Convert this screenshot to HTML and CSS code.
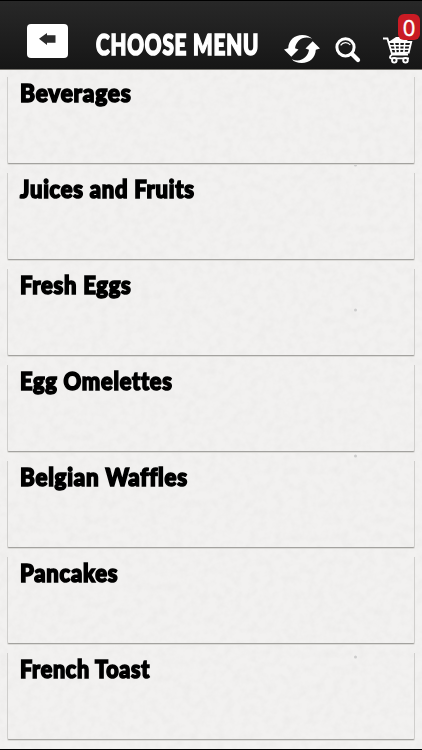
FILE: index.html
```html
<!DOCTYPE html>
<html>
	<head>
		<meta charset="UTF-8">
		<title>Choose Menu</title>
		<link rel="stylesheet" href="styles.css">
	</head>
	<body>
		<div class="header">
			<a href="#" class="back">
				<svg width="17" height="12" viewBox="0 0 17 12"><path d="M0 5.8L8 0v2.2h8.5v7.6H8V12z" fill="#2b2b2b"/></svg>
			</a>
			<h1 class="title"><span>CHOOSE MENU</span></h1>
			<a href="#" class="refresh">
				<svg width="37" height="30" viewBox="0 0 37 30">
					<g fill="#fff">
						<path d="M0 15.5L4.2 14.2C4.6 6 10.5 1 18.3 1C22.4 1 26 2.3 28.2 4.8C19.3 1 12.2 6.7 11 14.2L14.5 15.5L7.3 22.8z"/>
						<path d="M0 15.5L4.2 14.2C4.6 6 10.5 1 18.3 1C22.4 1 26 2.3 28.2 4.8C19.3 1 12.2 6.7 11 14.2L14.5 15.5L7.3 22.8z" transform="rotate(180 18 15)"/>
					</g>
				</svg>
			</a>
			<a href="#" class="search">
				<svg width="26" height="26" viewBox="0 0 26 26" fill="none" stroke="#fff">
					<circle cx="10.5" cy="10.3" r="8.6" stroke-width="3"/>
					<path d="M5.6 8.3C8 4.9 12.8 4.7 15.3 8" stroke-width="1.2"/>
					<path d="M17 17L23 23" stroke-width="4.2" stroke-linecap="round"/>
				</svg>
			</a>
			<a href="#" class="cart">
				<svg width="30" height="28" viewBox="0 0 30 28" fill="none" stroke="#fff" stroke-width="1.9">
					<path d="M7 5L13 1H20L25 5z" fill="#fff" stroke="none"/>
					<path d="M0 2.5H4.4L9.2 18.5H25M5.5 6H28.2L25.7 16.5L8.8 17.5M9.2 18.5C6 20.5 6.5 22.4 9 22.4H26"/>
					<path d="M7 9.7H27M8 13.3H26M11.2 6L13 17M16.6 6V17M21.8 6L20.8 17" stroke-width="1.6"/>
					<circle cx="11.3" cy="24.3" r="2.3" fill="#222"/>
					<circle cx="22.5" cy="24.3" r="2.3" fill="#222"/>
				</svg>
				<b class="badge">0</b>
			</a>
		</div>
		<ul class="menu">
			<li><span class="beverages">Beverages</span></li>
			<li><span class="juices">Juices and Fruits</span></li>
			<li><span class="eggs">Fresh Eggs</span></li>
			<li><span class="omelettes">Egg Omelettes</span></li>
			<li><span class="waffles">Belgian Waffles</span></li>
			<li><span class="pancakes">Pancakes</span></li>
			<li><span class="toast">French Toast</span></li>
		</ul>
	</body>
</html>
```
FILE: styles.css
```css
*{
	box-sizing: border-box;
}
body{
	margin: 0;
	height: 750px;
	overflow: hidden;
	border-bottom: 1px solid #000;
	/* paper grain with a few specks */
	background: #f2f1f0 url("data:image/svg+xml,%3Csvg xmlns='http://www.w3.org/2000/svg' width='422' height='750'%3E%3Cfilter id='n' x='0' y='0' width='100%25' height='100%25'%3E%3CfeTurbulence type='fractalNoise' baseFrequency='.12' numOctaves='3'/%3E%3CfeColorMatrix values='0 0 0 0 .45 0 0 0 0 .44 0 0 0 0 .43 .16 0 0 0 -.06'/%3E%3C/filter%3E%3Crect width='422' height='750' filter='url(%23n)'/%3E%3Cg fill='%23ccc'%3E%3Ccircle cx='355.5' cy='165' r='1.5'/%3E%3Ccircle cx='355.5' cy='310' r='1.5'/%3E%3Ccircle cx='355.5' cy='456' r='1.5'/%3E%3Ccircle cx='355.5' cy='657' r='1.5'/%3E%3C/g%3E%3C/svg%3E") no-repeat;
	font-family: Lato, "Liberation Sans", sans-serif;
	font-weight: 900;
}
.header{
	display: flex;
	align-items: flex-start;
	height: 70px;
	border-top: 1px solid #000;
	border-bottom: 1px solid #77756f;
	background: linear-gradient(#282828, #161616);
}
.header svg{
	display: block;
}
.back{
	display: flex;
	justify-content: center;
	width: 41px;
	height: 34px;
	margin: 23px 0 0 27px;
	padding-top: 9px;
	border-radius: 4px;
	background: #fff;
}
.title{
	width: 164px;
	margin: 25px 0 0 28px;
	font-size: 28px;
	font-weight: 900;
	line-height: 36px;
	letter-spacing: 1.2px;
	color: #fff;
	-webkit-text-stroke: 1.6px #fff;
	white-space: nowrap;
}
.title span, .menu span{
	display: inline-block;
	transform-origin: 0 50%;
}
.title span{
	transform: scaleX(.735);
}
.refresh{
	margin: 33px 0 0 24px;
}
.search{
	margin: 36px 0 0 14px;
}
.cart{
	position: relative;
	margin: 35px 0 0 22px;
}
.badge{
	position: absolute;
	left: 15px;
	top: -22px;
	width: 22px;
	height: 26px;
	border-radius: 6px;
	background: #c91b24;
	color: #fff;
	font: 22px/27px "Open Sans", sans-serif;
	-webkit-text-stroke: .4px #fff;
	text-align: center;
}
.menu{
	margin: 0;
	padding: 0 7px;
	list-style: none;
}
.menu li{
	height: 87px;
	margin: 7px 0 9px;
	padding-left: 12px;
	border: 1px solid #cfcecc;
	border-top: 0;
	border-bottom-color: #a3a29f;
	border-radius: 0 0 2px 2px;
	box-shadow: 0 1px 0 #dcdbd8;
}
.menu span{
	font-size: 24px;
	line-height: 31px;
	letter-spacing: .8px;
	color: #000;
	-webkit-text-stroke: 1.6px #000;
	white-space: nowrap;
}
.menu .beverages{
	transform: scaleX(.945);
}
.menu .juices{
	transform: scaleX(.917);
}
.menu .eggs{
	transform: scaleX(.916);
}
.menu .omelettes{
	transform: scaleX(.91);
}
.menu .waffles{
	transform: scaleX(.932);
}
.menu .pancakes{
	transform: scaleX(.919);
}
.menu .toast{
	transform: scaleX(.897);
}
```
